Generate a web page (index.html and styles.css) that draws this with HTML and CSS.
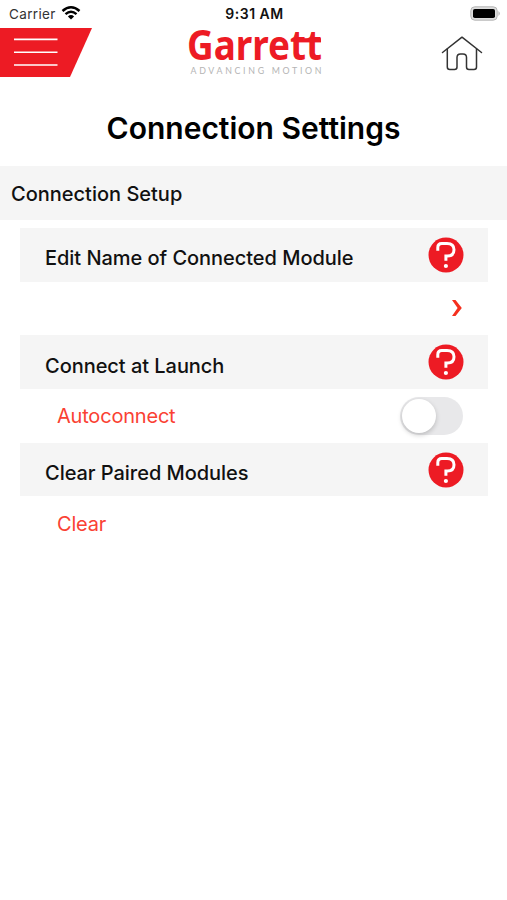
FILE: index.html
```html
<!DOCTYPE html>
<html lang="en">
<head>
<meta charset="utf-8">
<title>Connection Settings</title>
<link rel="stylesheet" href="styles.css">
</head>
<body>
<svg class="defs" width="0" height="0" aria-hidden="true">
  <symbol id="help" viewBox="0 0 36 36">
    <circle cx="18" cy="18" r="17.5" fill="#ed1b24"/>
    <path d="M9.8 13.8V10.5Q9.8 6.5 13.8 6.5H19Q26 6.5 26 12.8Q26 19 19.5 19H17.9V23.8" fill="none" stroke="#fff" stroke-width="3"/>
    <circle cx="17.9" cy="29" r="2.1" fill="#fff"/>
  </symbol>
</svg>
<header>
  <div class="status">
    <div class="carrier"><span>Carrier</span>
      <svg width="20" height="16" viewBox="0 0 20 16"><g fill="none" stroke="#000" stroke-width="2.5"><path d="M1.5 6Q10-1.6 18.5 6"/><path d="M4.5 9.1Q10 4.3 15.5 9.1"/></g><path d="M6.9 11.4Q10 8.8 13.1 11.4L10 14.6Z"/></svg>
    </div>
    <time>9:31 AM</time>
    <svg class="battery" width="31" height="15" viewBox="0 0 31 15"><rect x=".8" y=".8" width="26.4" height="13.4" rx="4" fill="#ddd" stroke="#b5b5b5"/><rect x="3" y="3" width="22" height="9" rx="1.8"/><path d="M28.5 5Q31 7.5 28.5 10Z" fill="#aaa"/></svg>
  </div>
  <nav>
    <svg class="menu" width="93" height="49" viewBox="0 0 93 49"><path d="M0 0H92L70 49H0Z" fill="#ed1b24"/><path d="M14 11.4H57.5M14 24.3H57.5M14 37H57.5" stroke="#fff" stroke-width="1.6"/></svg>
    <svg class="logo" width="140" height="49" viewBox="0 0 140 49"><text class="brand" x="0" y="32" textLength="135" lengthAdjust="spacingAndGlyphs">Garrett</text><rect x="107" y="10.2" width="27" height="4.2" fill="#ed1b24"/><text class="tagline" x="3.5" y="46.2" textLength="131">ADVANCING MOTION</text></svg>
    <svg class="home" width="42" height="36" viewBox="0 0 42 36"><g fill="none" stroke="#333" stroke-width="1.5" stroke-linecap="round" stroke-linejoin="round"><path d="M1.5 16.5L21 1.2L40.5 16.5"/><path d="M6.3 13V31Q6.3 33.5 8.8 33.5H13.5Q16 33.5 16 31V21.5Q16 18 19.5 18H22Q25.5 18 25.5 21.5V31Q25.5 33.5 28 33.5H33Q35.5 33.5 35.5 31V13"/></g></svg>
  </nav>
</header>
<main>
  <h1>Connection Settings</h1>
  <h2>Connection Setup</h2>
  <section>
    <h3><span>Edit Name of Connected Module</span><svg class="help"><use href="#help"/></svg></h3>
    <div class="row"><span></span><svg class="chevron" width="12" height="18" viewBox="0 0 12 18"><path d="M1 1H4.5L10.8 9L4.5 17H1L6.6 9Z" fill="#f5301e"/></svg></div>
  </section>
  <section>
    <h3><span>Connect at Launch</span><svg class="help"><use href="#help"/></svg></h3>
    <div class="row"><span>Autoconnect</span><div class="switch"><i></i></div></div>
  </section>
  <section>
    <h3><span>Clear Paired Modules</span><svg class="help"><use href="#help"/></svg></h3>
    <div class="row"><span>Clear</span></div>
  </section>
</main>
</body>
</html>
```
FILE: styles.css
```css
* { box-sizing: border-box; }
body { margin: 0; height: 900px; background: #fff; color: #111; font-family: Inter, "Liberation Sans", sans-serif; overflow: hidden; }
svg { display: block; flex: none; }
.defs { position: absolute; }
.status { height: 28px; display: grid; grid-template-columns: 1fr auto 1fr; align-items: center; font-size: 13.5px; line-height: 16px; padding: 0 7px 1px 9px; }
.carrier { display: flex; align-items: center; gap: 5px; color: #333; }
.carrier span { letter-spacing: .35px; }
.carrier svg { margin-top: -1px; }
time { font-size: 14px; font-weight: 600; letter-spacing: .5px; color: #111; }
.battery { justify-self: end; margin-right: -1px; }
nav { height: 49px; display: flex; }
.logo { margin-left: 94px; overflow: visible; }
.home { margin: 8px 0 0 114px; }
.brand { font: 700 41.5px "Noto Sans", sans-serif; fill: #ed1b24; }
.tagline { font: 400 8.8px Lato, sans-serif; fill: #b4b4b4; }
h1, h2, h3 { margin: 0; }
h1 { height: 89px; padding-top: 12px; display: flex; align-items: center; justify-content: center; font-size: 30px; font-weight: 600; color: #000; }
h2 { height: 54px; margin-bottom: 8px; padding: 1px 11px 0; display: flex; align-items: center; background: #f5f5f5; font-size: 20px; font-weight: 500; }
section { height: 107.4px; padding: 0 19px 0 20px; }
h3 { height: 53.5px; display: flex; align-items: center; justify-content: space-between; padding: 0 24.5px 0 25px; background: #f5f5f5; font-size: 20px; font-weight: 500; letter-spacing: -.04px; }
h3 span { padding-top: 7px; }
.help { width: 36px; height: 36px; }
.row { height: 53.9px; padding: 0 25px 0 37px; display: flex; align-items: center; justify-content: space-between; color: #fa4133; font-size: 20px; letter-spacing: -.2px; }
.row span { padding-top: 1px; }
.switch { width: 63px; height: 38px; border-radius: 19px; background: #e8e8ea; padding: 2px; }
.switch i { display: block; width: 34px; height: 34px; border-radius: 50%; background: #fff; box-shadow: 0 2px 5px #0003; }
```
